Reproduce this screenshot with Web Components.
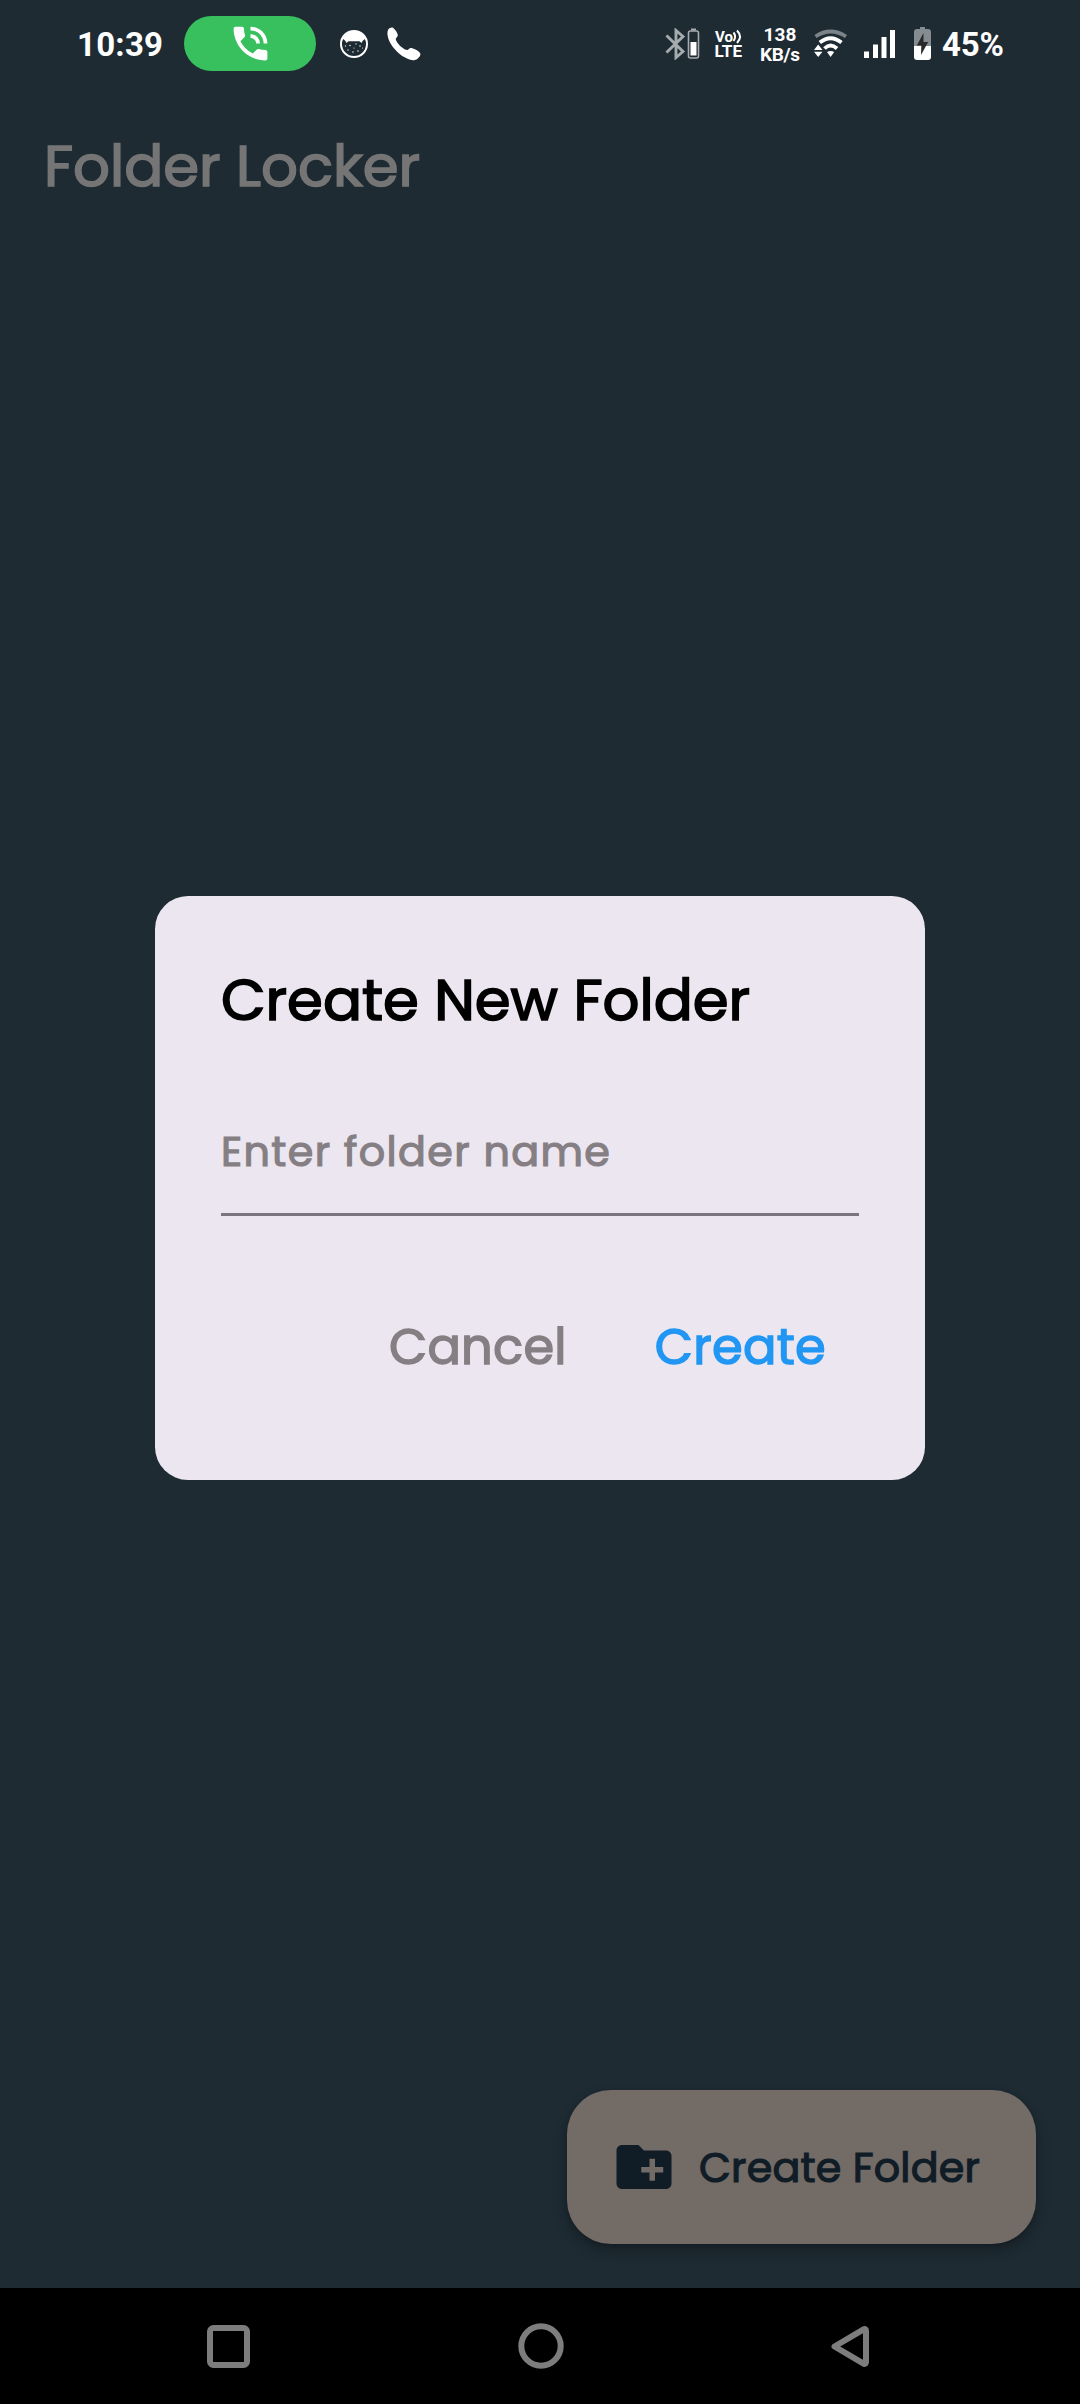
<!DOCTYPE html>
<html lang="en">
<head>
<meta charset="utf-8">
<title>Folder Locker</title>
<style>
html,body{margin:0;height:100%;background:#1e2b33}
body{font-family:Poppins,Inter,"Noto Sans",sans-serif;font-weight:400}
</style>
</head>
<body>
<locker-app></locker-app>
<script>
const define=(name,html,setup)=>{
  const t=document.createElement('template');
  t.innerHTML=html;
  customElements.define(name,class extends HTMLElement{
    constructor(){super();this.attachShadow({mode:'open'}).append(t.content.cloneNode(true));}
    connectedCallback(){if(setup)setup(this);}
  });
};

/* One line of text tracked out to the width given in its "width" attribute. */
define('fit-text',`<style>:host{display:block;white-space:pre;line-height:1.2}span{display:inline-block}</style><span><slot></slot></span>`,el=>{
  const w=+el.getAttribute('width'),n=el.textContent.length,s=el.shadowRoot.querySelector('span');
  el.style.width=w+'px';
  s.style.letterSpacing=(w-s.getBoundingClientRect().width)/(n-1)+'px';
});

/* Regular-weight label thickened with an outline of its own colour. */
define('bold-label',`<style>:host{display:block;white-space:pre;line-height:1.5;-webkit-text-stroke:.029em currentColor}</style><slot></slot>`);

define('status-bar',`<style>
:host{display:flex;align-items:center;height:88px;padding:0 76px 0 77px;box-sizing:border-box;color:#fff;font-family:Roboto,sans-serif;font-weight:700;font-size:33px}
svg{display:block;flex:none}
.pill{display:flex;align-items:center;justify-content:center;width:132px;height:55px;border-radius:28px;background:#38c05e;margin:0 0 1px 21px}
.time,.pct{padding-top:2px}
.cat{margin-left:23px}.call{margin-left:18px}
.bt{margin-left:auto}
.speed{display:flex;flex-direction:column;align-items:center;font-size:19px;line-height:20px;margin-left:18px;width:40px;padding-top:1px}
.speed fit-text{line-height:20px}
.volte{margin-left:15px;overflow:visible}.wifi{margin-left:14px}.sig{margin-left:16px}.bat{margin-left:18px}.pct{margin-left:11px}
</style>
<fit-text class="time" width="86">10:39</fit-text>
<div class="pill"><svg width="45" height="45" viewBox="0 0 24 24" fill="#fff"><path d="M20 15.500c-1.250 0-2.450-.2-3.570-.57a1 1 0 0 0-1.020.24l-2.200 2.200a15.050 15.050 0 0 1-6.590-6.580l2.200-2.210c.28-.27.36-.66.25-1.010A11.360 11.360 0 0 1 8.500 4c0-.55-.45-1-1-1H4c-.55 0-1 .45-1 1 0 9.390 7.610 17 17 17 .55 0 1-.45 1-1v-3.500c0-.55-.45-1-1-1zM19 12h2a9 9 0 0 0-9-9v2c3.870 0 7 3.130 7 7zm-4 0h2c0-2.760-2.240-5-5-5v2c1.660 0 3 1.340 3 3z"/></svg></div>
<svg class="cat" width="30" height="30" viewBox="0 0 30 30"><circle cx="15" cy="15" r="13" fill="none" stroke="#fff" stroke-width="2"/><path d="M3.500 9.500Q7 2 15 2t11.500 7.500L23.500 12l-.8 2-2.200-1.800H9.500L7.300 14l-.8-2z" fill="#fff"/><g fill="#dfe2e4"><circle cx="6.500" cy="17" r=".7"/><circle cx="11" cy="16.500" r=".8"/><circle cx="17" cy="15" r=".7"/><circle cx="21" cy="17" r=".8"/><circle cx="9" cy="21" r=".7"/><circle cx="14" cy="23" r=".8"/><circle cx="19" cy="22" r=".8"/><circle cx="15" cy="19" r=".6"/><circle cx="23.500" cy="19" r=".6"/></g></svg>
<svg class="call" width="34" height="34" viewBox="0 0 34 34"><path d="M1.200 2.500C2.500.5 5 0 6 .8c2.600 2 4.400 5 4.800 7.200.2 1.500-1.600 2.500-2 3.800-.3 1.700 2.900 6 5.700 8.300 2.300 1.900 4.500 3.200 6 3 1.200-.3 1.700-2 3.200-2 2.500 0 7.300 2.400 9.300 4.800 1.200 1.700-.7 4.400-2.500 5.800-2 1.700-5 1.900-8 .8C16 30.300 9.500 25.500 4.500 18 .8 12.300-.6 6 1.200 2.500z" fill="#fff"/></svg>
<svg class="bt" width="35" height="32" viewBox="0 0 35 32"><path d="M1.500 7.500 18 23.500 11 29.500V2.500L18 8.500 1.500 24.500" fill="none" stroke="#a6abae" stroke-width="2.900"/><rect x="23.500" y="3" width="10" height="27" rx="2" fill="none" stroke="#a6abae" stroke-width="1.600"/><path d="M26 .5h5v2h-5z" fill="#a6abae"/><path d="M25.500 14h6v13.500h-6z" fill="#fff"/></svg>
<svg class="volte" width="27" height="28" viewBox="0 0 27 28" fill="#fff" font-family="Roboto" font-weight="700"><text x="0" y="12.300" font-size="14.500" textLength="18" lengthAdjust="spacingAndGlyphs">Vo</text><path d="M18.500 2.500q3.300 4 0 8.500M22 .5q6 6 0 12.500" fill="none" stroke="#fff" stroke-width="2"/><text x="-.5" y="27.300" font-size="16.800" textLength="27.500" lengthAdjust="spacingAndGlyphs">LTE</text></svg>
<div class="speed"><fit-text width="33">138</fit-text><fit-text width="40">KB/s</fit-text></div>
<svg class="wifi" width="34" height="30" viewBox="0 0 34 30"><g fill="none" stroke="#fff" stroke-width="3.800"><path d="M1.500 7.500Q16.500-2.500 32 7.500" stroke="#7b8388"/><path d="M5.800 13.500Q16.500 5 27.500 13.500M10.500 19.500Q16.500 13.500 23 19.500"/></g><path d="M0 21h8.500L4.200 15.500zM0 22.700h8.500L4.200 28zM13 23q3.800-2 7.200 0L16.600 28z" fill="#fff"/></svg>
<svg class="sig" width="32" height="30" viewBox="0 0 32 30" fill="#fff"><path d="M0 22.500h5V29H0zM9 15.500h5V29H9zM17.500 8h5v21h-5zM26 1h5v28h-5z"/></svg>
<svg class="bat" width="17" height="34" viewBox="0 0 17 34"><path d="M6 0h5v2h3a3 3 0 0 1 3 3v14H0V5a3 3 0 0 1 3-3h3z" fill="#858c91"/><path d="M0 19h17v11a3 3 0 0 1-3 3H3a3 3 0 0 1-3-3z" fill="#fff"/><path d="M9.500 6 2.800 18.500h4.500L7 28l7.200-13H9.500z" fill="#292929"/></svg>
<fit-text class="pct" width="62">45%</fit-text>`);

define('app-bar',`<style>:host{display:flex;align-items:center;height:157px;padding-left:44px;font-size:57.750px;color:#757575}</style><slot></slot>`);

define('create-fab',`<style>
:host{display:flex;align-items:center;align-self:flex-end;margin:auto 44px 44px 0;width:469px;height:154px;box-sizing:border-box;padding-left:44px;gap:22px;border-radius:44px;background:#736b66;color:#101d27;font-size:41.250px;letter-spacing:.2px;box-shadow:0 7px 14px rgba(0,0,0,.24),0 2px 5px rgba(0,0,0,.15)}
svg{flex:none;display:block}
.text{padding-top:1px}
</style><svg width="66" height="66" viewBox="0 0 24 24" fill="currentColor"><path d="M20 6h-8l-2-2H4c-1.110 0-1.990.89-1.990 2L2 18c0 1.110.89 2 2 2h16c1.110 0 2-.89 2-2V8c0-1.110-.89-2-2-2zm-1 8h-3v3h-2v-3h-3v-2h3V9h2v3h3v2z"/></svg><div class="text"><slot></slot></div>`);

define('folder-dialog',`<style>
:host{display:block;width:770px;height:583.400px;box-sizing:border-box;padding:64px 66px 0;border-radius:33px;background:#ece6f0;color:#000}
.title{font-size:57.750px;height:80px;display:flex;align-items:center}
.field{margin-top:80px;height:63px;padding-bottom:29.500px;border-bottom:3px solid #79747e;display:flex;align-items:center;font-size:41.250px;letter-spacing:1.375px;color:#857f84}
.actions{margin-top:98px;height:67px;display:flex;align-items:center;justify-content:flex-end;gap:88px;padding-right:33px;font-size:49.500px;letter-spacing:.275px}
.cancel{color:#857f84}.create{color:#2196f3}
</style>
<div class="title"><bold-label>Create New Folder</bold-label></div>
<div class="field"><bold-label>Enter folder name</bold-label></div>
<div class="actions"><bold-label class="cancel">Cancel</bold-label><bold-label class="create">Create</bold-label></div>`);

define('nav-bar',`<style>:host{display:flex;align-items:center;justify-content:space-between;height:116px;flex:none;background:#000;padding:0 210px 0 206px;box-sizing:border-box}svg{display:block}</style>
<svg width="45" height="45" viewBox="0 0 45 45"><rect x="4" y="4" width="37" height="37" rx="3.500" fill="none" stroke="#7d7d7d" stroke-width="6"/></svg>
<svg width="46" height="46" viewBox="0 0 46 46"><circle cx="23" cy="23" r="19.700" fill="none" stroke="#7d7d7d" stroke-width="6"/></svg>
<svg width="40" height="45" viewBox="0 0 40 45"><path d="M4.500 22.500 34 5.200q2 -.5 2 1.500v31.600q0 2-2 1.500z" fill="none" stroke="#7d7d7d" stroke-width="6" stroke-linejoin="round"/></svg>`);

define('locker-app',`<style>
:host{display:flex;flex-direction:column;position:relative;width:1080px;height:2404px;overflow:hidden;background:#1e2b33}
status-bar,app-bar{flex:none}
.overlay{position:absolute;inset:88px 0 116px;display:flex;align-items:center;justify-content:center}
</style>
<status-bar></status-bar>
<app-bar><bold-label>Folder Locker</bold-label></app-bar>
<create-fab><bold-label>Create Folder</bold-label></create-fab>
<nav-bar></nav-bar>
<div class="overlay"><folder-dialog></folder-dialog></div>`);
</script>
</body>
</html>
